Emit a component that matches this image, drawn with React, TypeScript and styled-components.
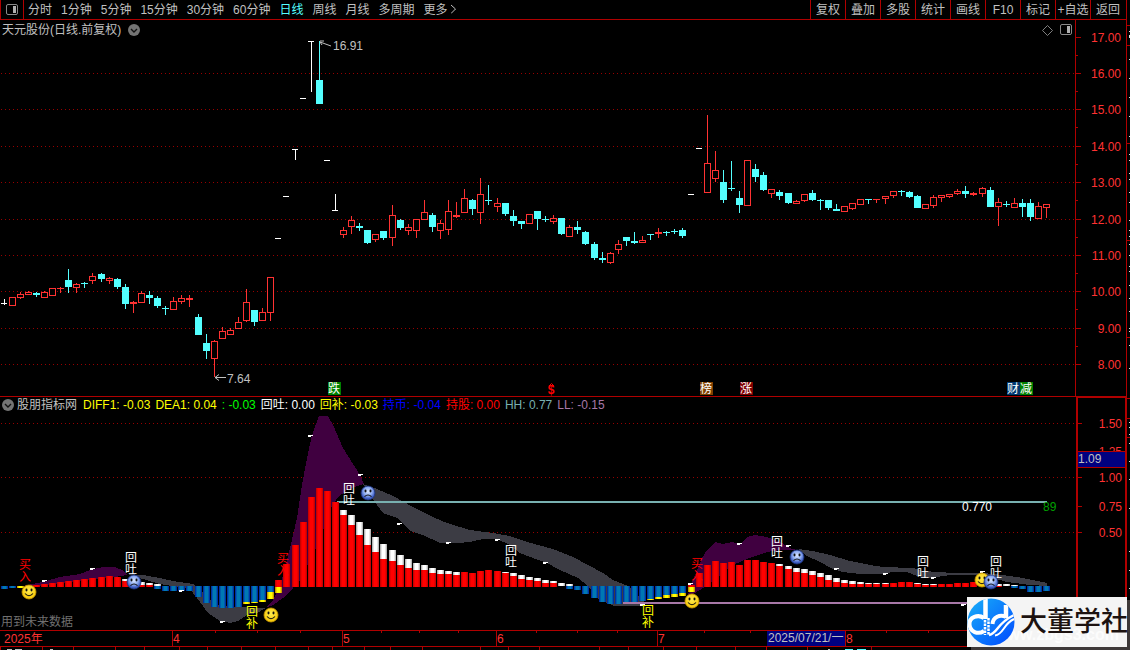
import React from "react";
import styled, { createGlobalStyle } from "styled-components";

const RED = "#b00000";
const UP = "#ff3232";
const DOWN = "#54ffff";
const TEXT = "#c0c0c0";
const FONT = '"Liberation Sans", "Noto Sans CJK SC", sans-serif';

const GlobalStyle = createGlobalStyle`
  body { margin: 0; background: #000; }
  * { box-sizing: border-box; }
  text { font-family: ${FONT}; font-size: 12px; }
`;

const Page = styled.div`
  position: relative;
  display: flex;
  min-height: 100vh;
  overflow: hidden;
  background: #000;
  color: ${TEXT};
  font-family: ${FONT};
  font-size: 12px;
  line-height: 16px;
`;
const Main = styled.main`
  flex: 1;
  min-width: 0;
  display: flex;
  flex-direction: column;
  border-right: 1px solid ${RED};
`;
const Toolbar = styled.header`
  display: flex;
  justify-content: space-between;
  height: 20px;
  border-bottom: 1px solid ${RED};
`;
const Periods = styled.nav`
  display: flex;
  align-items: center;
  gap: 9px;
`;
const PlainButton = styled.button`
  padding: 0;
  border: 0;
  background: none;
  color: inherit;
  font: inherit;
  white-space: nowrap;
  cursor: pointer;
`;
const BadgeButton = styled(PlainButton)`
  display: flex;
`;
const LayoutButton = styled(PlainButton)`
  display: flex;
  align-items: center;
  justify-content: center;
  width: 24px;
  height: 19px;
  margin-right: -5px;
  border: solid ${RED};
  border-width: 0 1px;
`;
const PeriodButton = styled(PlainButton)<{ $active?: boolean }>`
  color: ${(p) => (p.$active ? DOWN : TEXT)};
`;
const Tools = styled.div`
  display: flex;
  padding-right: 1px;
`;
const ToolButton = styled(PlainButton)`
  width: 35px;
  border-left: 1px solid ${RED};
`;
const Panel = styled.section`
  display: flex;
`;
const IndicatorPanel = styled(Panel)`
  border-top: 1px solid ${RED};
`;
const Plot = styled.div`
  flex: 1;
  min-width: 0;
`;
const TitleRow = styled.div`
  display: flex;
  align-items: center;
  gap: 7px;
  height: 20px;
  padding: 0 2px;
`;
const TitleIcons = styled.div`
  display: flex;
  align-items: center;
  gap: 7px;
  margin-left: auto;
`;
const Heading = styled.h1`
  margin: 0;
  font: inherit;
`;
const ReadoutRow = styled.div`
  display: flex;
  align-items: center;
  gap: 5px;
  height: 16px;
  padding-left: 2px;
  white-space: pre;
`;
const IndicatorName = styled.h2`
  margin: 0 1px 0 -2px;
  font: inherit;
`;
const Readout = styled.span<{ $color: string }>`
  color: ${(p) => p.$color};
`;
const Canvas = styled.svg<{ $height: number }>`
  display: block;
  width: 100%;
  height: ${(p) => p.$height}px;
`;
const PriceAxis = styled.div`
  width: 51px;
  border-left: 1px solid ${RED};
`;
const ValueAxis = styled.div`
  width: 51px;
  margin-right: -1px;
  border: solid ${RED};
  border-width: 1px 2px 0;
`;
const TimeAxis = styled.div`
  border: solid ${RED};
  border-width: 1px 0;
`;
const SideStrip = styled.aside`
  width: 3px;
`;
const Watermark = styled.div`
  position: absolute;
  right: 0;
  bottom: 0;
  width: 159px;
  height: 50px;
  background: #3d3838;
`;
const WatermarkCard = styled.div`
  position: absolute;
  left: -4px;
  top: -3px;
  display: flex;
  align-items: center;
  gap: 5px;
  width: 160px;
  height: 50px;
  background: #f4f4f4;
  color: #1c1210;
  font-size: 27px;
  line-height: 40px;
  font-weight: 500;
  white-space: nowrap;
`;
const GhostText = styled.span`
  position: absolute;
  left: 28px;
  bottom: 0;
  color: #fcfcfc;
  font-size: 16px;
  font-weight: 700;
  line-height: 24px;
`;
const BrandMark = styled.svg`
  position: relative;
  flex: none;
`;
const BrandText = styled.span`
  position: relative;
`;

type Tone = "r" | "c" | "w";
// centre x, high, body top, body bottom, low, tone
type Candle = [number, number, number, number, number, Tone];

const candles: Candle[] = [
  [4,299,303,304,305,"w"],[12,297,297,306,306,"r"],[20,292,294,298,299,"r"],[28,291,292,295,295,"r"],
  [36,292,293,295,297,"c"],[44,291,292,298,298,"r"],[52,288,288,296,296,"r"],[60,287,288,289,293,"r"],
  [68,269,280,287,293,"c"],[76,283,284,288,293,"r"],[84,282,283,284,288,"c"],[92,273,276,281,284,"r"],
  [101,273,274,279,282,"c"],[109,277,278,281,284,"r"],[117,278,279,287,289,"c"],[125,284,287,304,309,"c"],
  [133,301,302,304,313,"r"],[141,291,293,303,303,"r"],[149,291,295,298,304,"c"],[157,296,298,306,308,"c"],
  [165,306,308,309,315,"c"],[173,297,301,310,310,"r"],[181,295,298,302,304,"r"],[189,295,298,300,307,"r"],
  [198,314,317,335,335,"c"],[206,334,343,351,359,"c"],[214,340,341,359,377,"r"],[222,327,331,339,339,"r"],
  [230,328,330,335,335,"r"],[238,317,322,329,329,"r"],[246,289,302,321,322,"r"],[254,310,310,322,326,"c"],
  [262,308,312,321,321,"r"],[270,277,277,313,321,"r"],[278,238,238,239,239,"w"],[286,196,196,197,197,"w"],
  [295,149,149,150,160,"w"],[303,98,98,99,99,"w"],[311,41,41,42,92,"w"],[319,41,80,104,104,"c"],
  [327,160,160,161,161,"w"],[335,194,210,211,211,"w"],[343,227,230,235,238,"r"],[351,216,220,227,234,"r"],
  [359,223,226,228,231,"c"],[367,230,230,243,244,"c"],[375,234,234,240,242,"r"],[383,231,231,238,240,"c"],
  [392,205,215,238,246,"r"],[400,219,220,228,230,"c"],[408,224,227,231,235,"r"],[416,219,219,231,238,"r"],
  [424,200,212,220,220,"r"],[432,213,215,227,232,"c"],[440,220,223,231,239,"r"],[448,200,211,230,235,"r"],
  [456,202,215,217,218,"r"],[464,189,198,213,213,"r"],[472,199,200,209,215,"c"],[480,178,194,213,224,"r"],
  [488,185,200,201,205,"c"],[497,198,203,207,212,"r"],[505,203,203,214,216,"c"],[513,210,216,221,226,"c"],
  [521,221,221,224,229,"c"],[529,214,214,224,224,"r"],[537,211,211,219,230,"c"],[545,216,219,220,222,"c"],
  [553,215,218,222,224,"r"],[561,218,218,234,235,"c"],[569,225,227,237,237,"r"],[577,221,227,230,234,"c"],
  [585,231,232,244,245,"c"],[594,242,244,258,260,"c"],[602,252,258,260,263,"c"],[610,252,253,263,264,"r"],
  [618,240,244,250,254,"r"],[626,237,237,241,246,"c"],[634,232,241,243,244,"c"],[642,236,240,243,243,"r"],
  [650,234,234,235,240,"c"],[658,228,232,234,238,"r"],[666,231,232,233,236,"c"],[674,229,231,232,234,"c"],
  [682,228,230,236,238,"c"],[691,194,194,195,195,"w"],[699,148,148,149,149,"w"],[707,115,163,193,193,"r"],
  [715,151,170,179,182,"r"],[723,170,182,200,203,"c"],[731,161,188,189,191,"c"],[739,191,198,205,213,"c"],
  [747,160,160,206,206,"r"],[755,164,169,177,182,"c"],[763,172,175,190,191,"c"],[771,189,189,194,198,"r"],
  [779,190,192,196,200,"c"],[788,193,193,203,204,"c"],[796,200,201,204,204,"r"],[804,194,194,201,202,"r"],
  [812,190,193,200,201,"c"],[820,199,200,201,210,"c"],[828,200,200,208,210,"c"],[836,204,209,211,211,"c"],
  [844,206,206,212,212,"r"],[852,203,203,209,210,"r"],[860,199,199,205,205,"r"],[868,199,199,200,204,"c"],
  [876,199,199,200,203,"r"],[885,196,196,199,204,"r"],[893,191,191,196,198,"r"],[901,190,191,192,196,"c"],
  [909,191,192,197,198,"c"],[917,195,196,208,208,"c"],[925,204,204,209,209,"r"],[933,195,197,206,208,"r"],
  [941,195,195,198,202,"r"],[949,194,194,197,198,"r"],[957,189,191,194,195,"r"],[965,186,191,194,198,"c"],
  [973,192,193,195,196,"r"],[982,187,188,194,197,"r"],[990,187,190,207,207,"c"],[998,198,202,207,226,"r"],
  [1006,201,204,205,207,"c"],[1014,198,203,208,208,"r"],[1022,199,203,207,217,"c"],[1030,199,203,217,221,"c"],
  [1038,202,206,219,219,"r"],[1046,204,204,208,218,"r"],
];

const toneColor = { r: UP, c: DOWN, w: "#ffffff" };

function CandleMark({ data: [x, hi, top, bot, lo, tone] }: { data: Candle }) {
  const hollow = tone === "r" && bot - top > 2;
  return (
    <g fill={toneColor[tone]}>
      <rect x={x} y={hi} width={1} height={lo - hi} />
      <rect x={x - 3} y={top} width={tone === "w" ? 6 : 7} height={bot - top} />
      {hollow && <rect x={x - 2} y={top + 1} width={5} height={bot - top - 2} fill="#000" />}
    </g>
  );
}

// Histogram parts: centre x, top, bottom, fill
type Bar = [number, number, number, string];
const ZERO = 586;
// centre x, cap top, red top
const redBars: [number, number, number][] = [
  [36,585,585],[44,584,584],[52,583,583],[60,582,582],[68,581,581],[76,580,580],[84,579,579],[92,578,578],
  [101,577,577],[109,576,576],[117,577,577],[125,579,581],[133,580,583],[141,582,585],[149,583,585],
  [278,580,580],[286,564,564],[295,545,545],[303,522,522],[311,497,497],[319,488,488],[327,491,491],[335,502,502],
  [343,510,515],[351,515,525],[359,522,535],[367,529,545],[375,537,552],[383,544,559],[392,550,561],[400,555,565],
  [408,559,568],[416,563,570],[424,565,570],[432,568,573],[440,570,574],[448,571,574],[456,572,575],[464,572,572],
  [472,573,573],[480,571,571],[488,570,570],[497,571,571],[505,572,573],[513,573,576],[521,575,579],[529,577,580],
  [537,578,581],[545,580,583],[553,581,583],[691,585,585],[699,573,573],[707,565,565],[715,561,561],[723,563,563],
  [731,562,562],[739,565,565],[747,560,560],[755,560,560],[763,562,562],[771,563,563],[779,564,566],[788,566,569],
  [796,568,572],[804,569,573],[812,571,575],[820,573,577],[828,575,580],[836,578,582],[844,580,583],[852,581,584],
  [860,582,584],[868,583,584],[876,583,584],[885,583,584],[893,583,583],[901,582,582],[909,582,582],[917,583,584],
  [925,584,585],[933,584,585],[941,584,584],[949,584,584],[957,583,583],[965,583,583],[973,582,582],[998,584,586],
];
// centre x, blue bottom, yellow bottom
const blueBars: [number, number, number][] = [
  [4,589,589],[12,588,588],[20,586,588],[157,589,589],[165,591,591],[173,591,591],[181,591,591],[189,591,591],
  [198,597,597],[206,603,603],[214,607,607],[222,608,608],[230,608,608],[238,607,607],[246,602,604],[254,602,603],
  [262,600,602],[270,592,599],[569,589,589],[577,590,590],[585,594,594],[594,598,598],[602,602,602],[610,604,604],
  [618,604,604],[626,603,603],[634,602,602],[642,601,601],[650,599,600],[658,597,599],[666,595,598],[674,594,597],
  [682,593,596],[1014,588,588],[1022,589,589],[1030,592,592],[1038,592,592],[1046,591,591],
];
const bars: Bar[] = [
  ...redBars.flatMap(([x, cap, top]): Bar[] => [
    [x, cap, top, "url(#white)"],
    [x, top, ZERO + 1, "url(#red)"],
  ]),
  ...blueBars.flatMap(([x, bot, cap]): Bar[] => [
    [x, ZERO, bot, "url(#blue)"],
    [x, bot, cap, "url(#yellow)"],
  ]),
  [157,584,586,"url(#white)"],[561,583,586,"url(#white)"],[569,584,586,"url(#white)"],
  [278,587,593,"url(#yellow)"],[691,587,592,"url(#yellow)"],
  [1006,584,586,"url(#white)"],[1014,585,586,"url(#white)"],
];

const purpleAreas = [
  "22,586 43,582 60,577 80,574 93,569 103,567 115,567 122,570 127,575 115,577 90,580 60,583 40,586",
  "265,608 273,600 281,583 290,548 297,518 302,485 307,458 312,435 319,416 328,416 333,425 343,448 360,475 364,484 360,485 347,490 337,498 330,510 320,540 300,580 293,588 283,598 273,605",
  "687,597 693,580 697,570 702,558 707,550 715,542 723,544 732,542 740,544 747,537 755,535 767,537 780,542 792,549 798,550 780,550 767,552 747,559 733,565 705,587 695,593 687,598",
];
const greyAreas = [
  "127,574 143,575 160,578 173,581 193,584 197,587 215,604 230,607 266,608 257,613 247,615 238,621 230,623 220,621 208,613 200,602 190,589 160,584 143,579",
  "363,484 377,489 393,496 413,507 433,517 447,523 470,530 493,533 510,536 527,542 553,549 573,557 590,566 603,573 613,580 628,586 645,603 640,606 614,606 598,599 588,586 578,578 560,570 547,563 533,558 520,553 510,545 497,539 483,539 470,542 457,543 440,543 423,535 410,531 397,518 383,513 377,505 370,495",
  "798,549 813,551 830,555 850,561 870,565 883,567 913,568 923,571 953,573 983,573 1003,575 1023,578 1047,583 1047,586 1030,585 1007,582 983,575 950,575 930,578 917,576 907,572 893,572 880,574 860,574 843,572 833,569 820,562 807,556",
];
const crestTicks: [number, number][] = [
  [44,581],[92,569],[181,591],[222,622],[310,436],[360,475],[399,524],[448,543],[497,540],[545,563],[690,584],
  [739,544],[788,546],[836,569],[642,605],[885,574],[933,578],[982,572],[963,605],
];

// centre x, first baseline, upper glyph, lower glyph, colour
type Mark = [number, number, string, string, string];
const marks: Mark[] = [
  [131,562,"回","吐","#fff"],[349,493,"回","吐","#fff"],[511,555,"回","吐","#fff"],[777,546,"回","吐","#fff"],
  [923,566,"回","吐","#fff"],[996,566,"回","吐","#fff"],[252,616,"回","补","#ff0"],[648,615,"回","补","#ff0"],
  [25,569,"买","入","#f00"],[283,563,"买","入","#f00"],[697,568,"买","入","#f00"],
];

function VerticalMark({ data: [x, y, upper, lower, color] }: { data: Mark }) {
  return (
    <g fill={color} textAnchor="middle">
      <text x={x} y={y}>{upper}</text>
      <text x={x} y={y + 12}>{lower}</text>
    </g>
  );
}

function Face({ x, y, sad }: { x: number; y: number; sad?: boolean }) {
  return (
    <g transform={`translate(${x} ${y})`}>
      <circle r={7} fill={sad ? "url(#sadFace)" : "url(#happyFace)"} stroke={sad ? "#1c3278" : "#c89800"} strokeWidth={0.8} />
      <ellipse cx={-2.5} cy={-2} rx={1} ry={1.4} fill="#111" />
      <ellipse cx={2.5} cy={-2} rx={1} ry={1.4} fill="#111" />
      <path d={sad ? "M-3.5 3.6Q0 .4 3.5 3.6" : "M-4 1.5Q0 6 4 1.5"} fill="none" stroke="#111" strokeWidth={1.1} />
    </g>
  );
}

function BarGradient({ id, edge, mid }: { id: string; edge: string; mid: string }) {
  return (
    <linearGradient id={id}>
      <stop offset="0" stopColor={edge} />
      <stop offset=".3" stopColor={mid} />
      <stop offset=".7" stopColor={mid} />
      <stop offset="1" stopColor={edge} />
    </linearGradient>
  );
}

function GridLines({ ys }: { ys: number[] }) {
  return (
    <g stroke="#980000" strokeDasharray="1 3">
      {ys.map((y) => <line key={y} x1={1} x2="100%" y1={y + 0.5} y2={y + 0.5} />)}
    </g>
  );
}

function ChevronBadge() {
  return (
    <svg width="12" height="12" viewBox="0 0 12 12" aria-hidden="true">
      <circle cx="6" cy="6" r="6" fill="#747474" />
      <path d="M3 5l3 3 3-3" fill="none" stroke="#111" strokeWidth="1.4" />
    </svg>
  );
}

function PaneIcon() {
  return (
    <svg width="13" height="12" viewBox="0 0 13 12" aria-hidden="true">
      <rect x=".5" y=".5" width="11" height="10" rx="1.5" fill="none" stroke="#8a8a8a" />
      <rect x="7" y="2" width="3" height="7" fill="#b0b0b0" />
    </svg>
  );
}

const priceLabels: [string, number][] = [
  ["17.00",37],["16.00",73],["15.00",109],["14.00",146],["13.00",182],["12.00",219],["11.00",255],["10.00",291],["9.00",328],["8.00",364],
];
const valueLabels: [string, number][] = [["1.50",423],["1.25",451],["1.00",477],["0.75",506],["0.50",532]];

const events: [number, string, string][] = [
  [328,"跌","#008000"],[700,"榜","#804000"],[740,"涨","#800000"],[1007,"财","#003870"],[1020,"减","#008000"],
];

const periods = ["分时","1分钟","5分钟","15分钟","30分钟","60分钟","日线","周线","月线","多周期"];
const tools = ["复权","叠加","多股","统计","画线","F10","标记","+自选","返回"];
const readouts: [string, string][] = [
  ["DIFF1: -0.03","#ff0"],["DEA1: 0.04","#ff0"],[": -0.03","#0f0"],["回吐: 0.00","#fff"],["回补: -0.03","#ff0"],
  ["持币: -0.04","#00f"],["持股: 0.00","#f00"],["HH: 0.77","#78b0b0"],["LL: -0.15","#a878a8"],
];

const months: [number, string][] = [[172,"4"],[342,"5"],[496,"6"],[657,"7"],[845,"8"]];
const weekTicks = [215,257,300,381,419,458,536,577,617,704,750,886,928];
const lowerTicks = [0,42,73,115,144,179,207,241,275,308,332,364,390,422,480,508,539,599,628,663,696,735,766,807,871];
const sideLines = [25,45,143,240,337,398,418,437];
const sideDots = [31,35,36,37,59,78,97,116,136,154,160,173,179,192,202,220,230,236,244,255,266,271,285,298,311,328,331,345,368,422,427,434,443,461,479,508,551,570,588];

export default function App() {
  return (
    <Page>
      <GlobalStyle />
      <Main>
        <Toolbar>
          <Periods aria-label="周期">
            <LayoutButton aria-label="布局"><PaneIcon /></LayoutButton>
            {periods.map((p) => <PeriodButton key={p} $active={p === "日线"}>{p}</PeriodButton>)}
            <PeriodButton>
              更多{" "}
              <svg width="6" height="10" viewBox="0 0 6 10" aria-hidden="true">
                <path d="M0 1l4.5 4L0 9.500" fill="none" stroke={TEXT} />
              </svg>
            </PeriodButton>
          </Periods>
          <Tools>{tools.map((t) => <ToolButton key={t}>{t}</ToolButton>)}</Tools>
        </Toolbar>

        <Panel>
          <Plot>
            <TitleRow>
              <Heading>天元股份(日线.前复权)</Heading>
              <BadgeButton aria-label="切换股票"><ChevronBadge /></BadgeButton>
              <TitleIcons>
                <svg width="11" height="11" viewBox="0 0 11 11" aria-hidden="true">
                  <path d="M5.500 .5l5 5-5 5-5-5z" fill="none" stroke="#808080" />
                </svg>
                <PaneIcon />
              </TitleIcons>
            </TitleRow>
            {/* Ordinates inside the group are window rows; the plot starts at row 40. */}
            <Canvas $height={356} role="img" aria-label="日线K线图">
              <g transform="translate(0 -40)">
                <g shapeRendering="crispEdges">
                  <GridLines ys={priceLabels.slice(1).map(([, y]) => y)} />
                  {candles.map((c) => <CandleMark key={c[0]} data={c} />)}
                </g>
                <g fill="none" stroke={TEXT}>
                  <path d="M320 42l11 4M320 41h4M320 42l2 3" />
                  <path d="M215 377.500h11M215 377.500l4-3M215 377.500l4 3" />
                </g>
                <g fill={TEXT}>
                  <text x={333} y={50}>16.91</text>
                  <text x={227} y={383}>7.64</text>
                </g>
                {events.map(([x, label, color]) => (
                  <g key={label}>
                    <rect x={x} y={382} width={13} height={13} fill={color} />
                    <text x={x + 6} y={393} textAnchor="middle" fill="#fff">{label}</text>
                  </g>
                ))}
                <text x={551} y={394} textAnchor="middle" fill="#f00" fontWeight="bold">$</text>
                <path d="M549 386l2.500-2.500 2.500 2.500" fill="none" stroke="#f00" />
              </g>
            </Canvas>
          </Plot>
          <PriceAxis>
            <Canvas $height={376} aria-label="价格">
              <g transform="translate(0 -20)">
                {priceLabels.map(([label, y]) => (
                  <g key={label}>
                    <rect y={y} width={5} height={1} fill={RED} />
                    {label !== "8.00" && <rect y={y + 18} width={2} height={1} fill={RED} />}
                    <text x={45} y={y + 5} textAnchor="end" fill={UP}>{label}</text>
                  </g>
                ))}
              </g>
            </Canvas>
          </PriceAxis>
        </Panel>

        <IndicatorPanel>
          <Plot>
            <ReadoutRow>
              <ChevronBadge />
              <IndicatorName>股朋指标网</IndicatorName>
              {readouts.map(([text, color]) => <Readout key={text} $color={color}>{text}</Readout>)}
            </ReadoutRow>
            {/* Ordinates inside the group are window rows; the plot starts at row 413. */}
            <Canvas $height={217} role="img" aria-label="股朋指标">
              <defs>
                <BarGradient id="red" edge="#b80000" mid="#ff0000" />
                <BarGradient id="white" edge="#a0a0a0" mid="#ffffff" />
                <BarGradient id="blue" edge="#00189c" mid="#0078b4" />
                <BarGradient id="yellow" edge="#b87800" mid="#ffff00" />
                <radialGradient id="sadFace" cy=".4">
                  <stop offset="0" stopColor="#dce8ff" />
                  <stop offset=".6" stopColor="#8caaf0" />
                  <stop offset="1" stopColor="#3c5ac0" />
                </radialGradient>
                <radialGradient id="happyFace" cy=".4">
                  <stop offset="0" stopColor="#ffec50" />
                  <stop offset="1" stopColor="#f8cc10" />
                </radialGradient>
              </defs>
              <g transform="translate(0 -413)">
                <g shapeRendering="crispEdges">
                  <GridLines ys={[423, 477, 532]} />
                  {greyAreas.map((pts) => <polygon key={pts} points={pts} fill="#3c3c44" />)}
                  {purpleAreas.map((pts) => <polygon key={pts} points={pts} fill="#400040" />)}
                  <rect x={337} y={501} width={710} height={2} fill="#78b0b0" />
                  {bars.filter(([, top, bot]) => bot > top).map(([x, top, bot, fill]) => (
                    <rect key={`${x}-${top}-${fill}`} x={x - 3} y={top} width={7} height={bot - top} fill={fill} />
                  ))}
                  <rect x={623} y={602} width={344} height={2} fill="#a878a8" />
                  {crestTicks.map(([x, y]) => (
                    <g key={x} fill="#fff">
                      <rect x={x - 2} y={y - 1} width={5} height={1} />
                      <rect x={x - 2} y={y} width={3} height={1} />
                    </g>
                  ))}
                </g>
                {marks.map((m) => <VerticalMark key={m[0]} data={m} />)}
                <Face x={29} y={592} /><Face x={271} y={615} /><Face x={692} y={601} /><Face x={982} y={580} />
                <Face x={134} y={582} sad /><Face x={368} y={493} sad /><Face x={797} y={557} sad /><Face x={991} y={582} sad />
                <text x={962} y={511} fill="#fff">0.770</text>
                <text x={1043} y={511} fill="#00a000">89</text>
                <text x={1} y={626} fill="#707070">用到未来数据</text>
              </g>
            </Canvas>
          </Plot>
          <ValueAxis>
            <Canvas $height={232} aria-label="指标值">
              <g transform="translate(0 -398)">
                {valueLabels.map(([label, y]) => (
                  <g key={label}>
                    <rect y={y} width={4} height={1} fill={RED} />
                    <text x={44} y={y + 5} textAnchor="end" fill={UP}>{label}</text>
                  </g>
                ))}
                <rect y={451} width="100%" height={17} fill={RED} />
                <rect y={452} width="100%" height={15} fill="#000080" />
                <text x={0} y={463} fill={TEXT}>1.09</text>
              </g>
            </Canvas>
          </ValueAxis>
        </IndicatorPanel>

        <TimeAxis>
          <Canvas $height={15} aria-label="日期">
            <text x={4} y={12} fill={UP}>2025年</text>
            {weekTicks.map((x) => <rect key={x} x={x} width={1} height={2} fill={RED} />)}
            {months.map(([x, label]) => (
              <g key={x}>
                <rect x={x} width={1} height={15} fill={RED} />
                <text x={x + 1} y={12} fill={UP}>{label}</text>
              </g>
            ))}
            <rect x={767} width={78} height={15} fill="#000080" />
            <text x={768} y={11} fill={TEXT}>2025/07/21/一</text>
          </Canvas>
        </TimeAxis>
        <Canvas $height={3} aria-hidden="true">
          {lowerTicks.map((x) => <rect key={x} x={x} width={1} height={3} fill={RED} />)}
          <g fill={TEXT}>
            <rect x={7} y={2} width={5} height={1} /><rect x={15} y={2} width={7} height={1} />
            <rect x={50} y={2} width={3} height={1} /><rect x={828} y={2} width={2} height={1} />
          </g>
          <rect x={845} y={2} width={8} height={1} fill={DOWN} />
          <rect x={857} y={2} width={9} height={1} fill={DOWN} />
        </Canvas>
      </Main>

      <SideStrip>
        <Canvas $height={600} aria-hidden="true">
          {sideLines.map((y) => <rect key={y} y={y} width={3} height={1} fill={RED} />)}
          {sideDots.map((y) => <rect key={y} x={2} y={y} width={1} height={1} fill="#e0e0e0" />)}
        </Canvas>
      </SideStrip>

      <Watermark>
        <WatermarkCard>
          <GhostText>www.zbgs3.com</GhostText>
          <BrandMark width="48" height="48" viewBox="0 0 48 48" role="img" aria-label="大董学社标志">
            <defs>
              <linearGradient id="disc" x2="1" y2="1">
                <stop offset="0" stopColor="#18b0f8" />
                <stop offset="1" stopColor="#0048ff" />
              </linearGradient>
              <clipPath id="discClip"><circle cx="24" cy="24" r="23.500" /></clipPath>
            </defs>
            <circle cx="24" cy="24" r="23.500" fill="url(#disc)" />
            <g clipPath="url(#discClip)" fill="none" stroke="#fff">
              <path d="M18.500 0V21" strokeWidth="4.500" />
              <path d="M17 20C11 16 2 19 2.500 26.500S11 37 17 33" strokeWidth="4" />
              <path d="M39 7V20" strokeWidth="4.500" />
              <path d="M39 19C33 16 26 19 25.500 26" strokeWidth="4" />
              <path d="M22 37C31 35 29 26 47 17" strokeWidth="2.500" />
              <path d="M28 37.500C37 36 36 26 47 21" strokeWidth="2" />
              <path d="M18 22V37M21.500 20V37" strokeWidth="2.500" strokeDasharray="2.500 1" />
            </g>
          </BrandMark>
          <BrandText>大董学社</BrandText>
        </WatermarkCard>
      </Watermark>
    </Page>
  );
}
